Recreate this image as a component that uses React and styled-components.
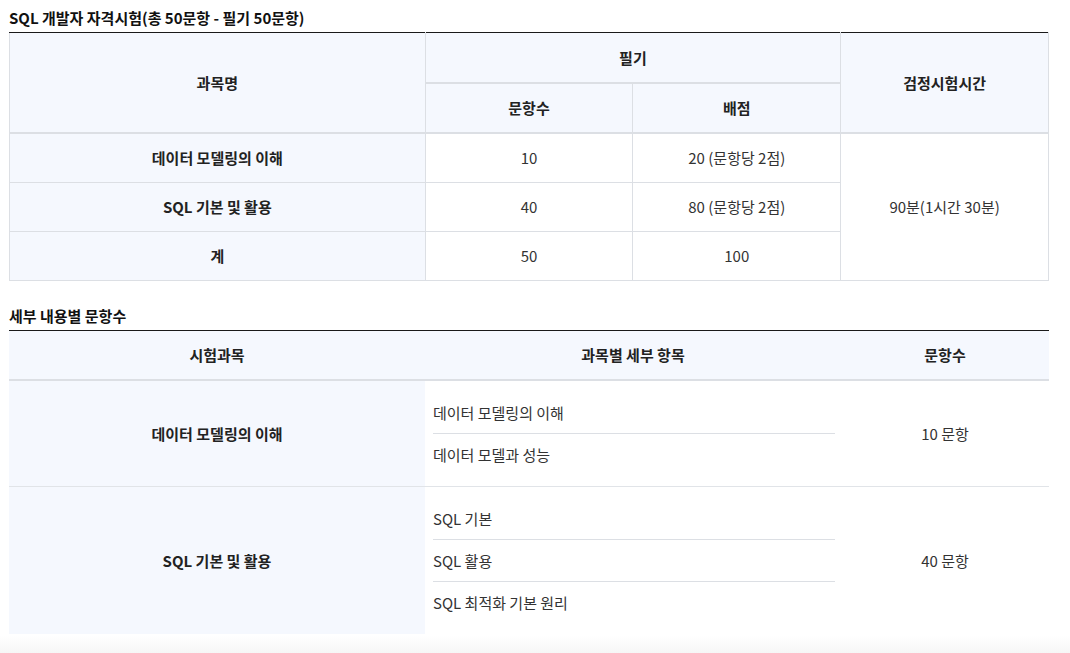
import React from "react";
import styled, { createGlobalStyle } from "styled-components";

const GlobalStyle = createGlobalStyle`
  html, body {
    margin: 0;
    padding: 0;
    background: #fff;
  }
  body {
    font-family: "Noto Sans CJK KR", "Noto Sans", sans-serif;
    color: #333;
  }
`;

const Wrapper = styled.div`
  width: 1070px;
`;

const Page = styled.div`
  padding: 8px 21px 0 9px;
`;

const Title = styled.h3`
  margin: ${(p) => (p.$first ? "0" : "25px")} 0 4px;
  font-size: 15px;
  line-height: 20px;
  font-weight: 700;
  color: #111;
`;

const Table = styled.table`
  width: 100%;
  border-collapse: collapse;
  table-layout: fixed;
  font-size: 15px;
`;

const Col = styled.col`
  width: ${(p) => p.$w};
`;

const Th = styled.th`
  height: ${(p) => (p.$top ? "49px" : "48px")};
  padding: 0 10px;
  background: #f5f8fe;
  color: #222;
  font-weight: 700;
  line-height: 20px;
  text-align: center;
  vertical-align: middle;
  border: 1px solid #dcdfe4;
  border-top: ${(p) => (p.$top ? "1px solid #1a1a1a" : "2px solid #dcdfe4")};
  border-bottom: 2px solid #dcdfe4;
`;

const Td = styled.td`
  height: 48px;
  padding: 0 10px;
  line-height: 20px;
  text-align: center;
  vertical-align: middle;
  color: #333;
  background: ${(p) => (p.$label ? "#f5f8fe" : "#fff")};
  font-weight: ${(p) => (p.$label ? 700 : 400)};
  border: 1px solid #dcdfe4;
  ${(p) => p.$label && "color: #222;"}
`;

const DetailTh = styled.th`
  height: 48px;
  padding: 0 10px;
  background: #f5f8fe;
  color: #222;
  font-weight: 700;
  line-height: 20px;
  text-align: center;
  border-top: 1px solid #1a1a1a;
  border-bottom: 2px solid #dcdfe4;
`;

const DetailTd = styled.td`
  padding: ${(p) => (p.$list ? "11px 6px 11px 8px" : "0 10px")};
  text-align: ${(p) => (p.$list ? "left" : "center")};
  vertical-align: middle;
  line-height: 20px;
  color: #333;
  font-weight: ${(p) => (p.$label ? 700 : 400)};
  background: ${(p) => (p.$label ? "#f5f8fe" : "#fff")};
  border-bottom: ${(p) => (p.$last ? "none" : "1px solid #e1e4e8")};
  ${(p) => p.$label && "color: #222;"}
`;

const ItemList = styled.ul`
  margin: 0;
  padding: 0;
  list-style: none;
`;

const Item = styled.li`
  height: 41px;
  line-height: 41px;
  color: #333;
  & + & {
    border-top: 1px solid #dcdfe4;
  }
`;

const Footer = styled.div`
  height: 18px;
  margin-top: 1px;
  background: linear-gradient(to bottom, #ffffff, #f6f6f6);
`;

const scoreRows = [
  { name: "데이터 모델링의 이해", count: "10", score: "20 (문항당 2점)" },
  { name: "SQL 기본 및 활용", count: "40", score: "80 (문항당 2점)" },
  { name: "계", count: "50", score: "100" },
];

const detailRows = [
  { name: "데이터 모델링의 이해", items: ["데이터 모델링의 이해", "데이터 모델과 성능"], count: "10 문항" },
  { name: "SQL 기본 및 활용", items: ["SQL 기본", "SQL 활용", "SQL 최적화 기본 원리"], count: "40 문항" },
];

export default function App() {
  return (
    <Wrapper>
      <GlobalStyle />
      <Page>
        <Title $first>SQL 개발자 자격시험(총 50문항 - 필기 50문항)</Title>
        <Table>
          <colgroup>
            <Col $w="40%" />
            <Col $w="20%" />
            <Col $w="20%" />
            <Col $w="20%" />
          </colgroup>
          <thead>
            <tr>
              <Th $top rowSpan={2}>과목명</Th>
              <Th $top colSpan={2}>필기</Th>
              <Th $top rowSpan={2}>검정시험시간</Th>
            </tr>
            <tr>
              <Th>문항수</Th>
              <Th>배점</Th>
            </tr>
          </thead>
          <tbody>
            {scoreRows.map((r, i) => (
              <tr key={r.name}>
                <Td $label>{r.name}</Td>
                <Td>{r.count}</Td>
                <Td>{r.score}</Td>
                {i === 0 && <Td rowSpan={3}>90분(1시간 30분)</Td>}
              </tr>
            ))}
          </tbody>
        </Table>

        <Title>세부 내용별 문항수</Title>
        <Table>
          <colgroup>
            <Col $w="40%" />
            <Col $w="40%" />
            <Col $w="20%" />
          </colgroup>
          <thead>
            <tr>
              <DetailTh>시험과목</DetailTh>
              <DetailTh>과목별 세부 항목</DetailTh>
              <DetailTh>문항수</DetailTh>
            </tr>
          </thead>
          <tbody>
            {detailRows.map((r, i) => {
              const last = i === detailRows.length - 1;
              return (
                <tr key={r.name}>
                  <DetailTd $label $last={last}>{r.name}</DetailTd>
                  <DetailTd $list $last={last}>
                    <ItemList>
                      {r.items.map((it) => (
                        <Item key={it}>{it}</Item>
                      ))}
                    </ItemList>
                  </DetailTd>
                  <DetailTd $last={last}>{r.count}</DetailTd>
                </tr>
              );
            })}
          </tbody>
        </Table>
      </Page>
      <Footer />
    </Wrapper>
  );
}
